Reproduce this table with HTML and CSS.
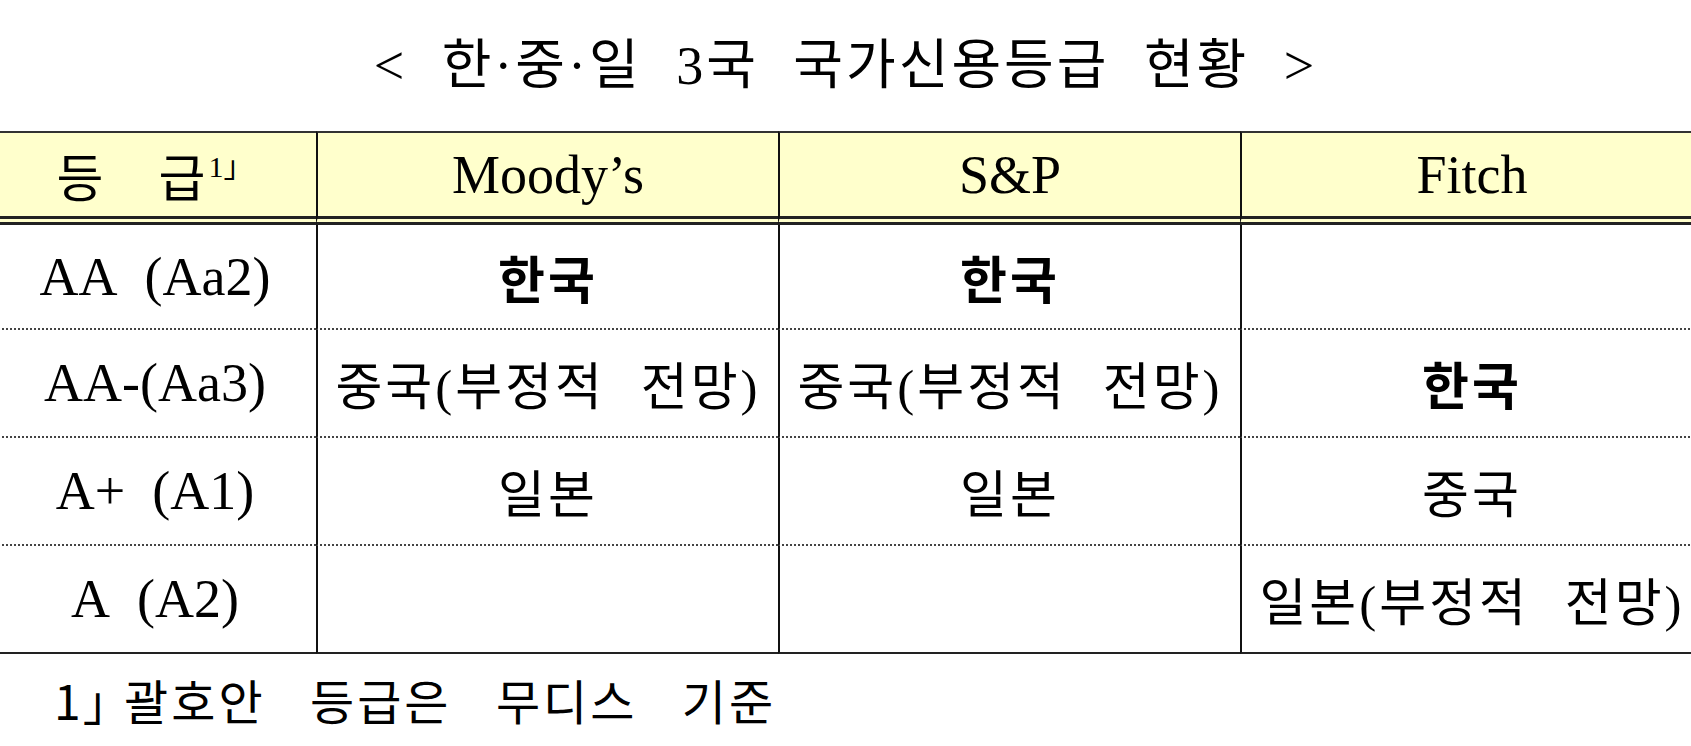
FILE: index.html
```html
<!DOCTYPE html>
<html lang="ko">
<head>
<meta charset="utf-8">
<title>한·중·일 3국 국가신용등급 현황</title>
<link rel="stylesheet" href="styles.css">
</head>
<body>
<h1 class="title">&lt; 한·중·일 3국 국가신용등급 현황 &gt;</h1>
<table class="ratings">
  <colgroup>
    <col class="c-grade">
    <col class="c-agency">
    <col class="c-agency">
    <col class="c-agency">
  </colgroup>
  <thead>
    <tr>
      <th class="ko">등<span class="gap"></span>급<sup class="note">1」</sup></th>
      <th>Moody’s</th>
      <th>S&amp;P</th>
      <th>Fitch</th>
    </tr>
  </thead>
  <tbody>
    <tr>
      <td class="grade">AA&nbsp; (Aa2)</td>
      <td class="ko strong">한국</td>
      <td class="ko strong">한국</td>
      <td></td>
    </tr>
    <tr>
      <td class="grade">AA-(Aa3)</td>
      <td class="ko">중국(부정적 전망)</td>
      <td class="ko">중국(부정적 전망)</td>
      <td class="ko strong">한국</td>
    </tr>
    <tr>
      <td class="grade">A+&nbsp; (A1)</td>
      <td class="ko">일본</td>
      <td class="ko">일본</td>
      <td class="ko">중국</td>
    </tr>
    <tr>
      <td class="grade">A&nbsp; (A2)</td>
      <td></td>
      <td></td>
      <td class="ko">일본(부정적 전망)</td>
    </tr>
  </tbody>
</table>
<p class="footnote"><span class="fn-mark">1」 </span>괄호안 등급은 무디스 기준</p>
</body>
</html>
```

FILE: styles.css
```css
html, body {
  margin: 0;
  padding: 0;
  background: #ffffff;
}

body {
  color: #000000;
  overflow: hidden;
  font-family: "Liberation Serif", "Noto Sans CJK KR", serif;
}

.title {
  box-sizing: border-box;
  margin: 0;
  height: 131px;
  padding-top: 34px;
  font-size: 54px;
  line-height: 64px;
  font-weight: 400;
  text-align: center;
  letter-spacing: 3px;
  word-spacing: 18px;
  font-family: "Liberation Serif", "Noto Sans CJK KR", serif;
}

.ratings {
  border-collapse: separate;
  border-spacing: 0;
  table-layout: fixed;
  width: 1708px;
  margin-left: -6px;
}

.c-grade {
  width: 322px;
}

.c-agency {
  width: 462px;
}

.ratings th,
.ratings td {
  box-sizing: border-box;
  padding: 0;
  text-align: center;
  vertical-align: middle;
  white-space: nowrap;
}

.ratings th {
  height: 94px;
  background: #ffffcc;
  border-top: 2px solid #333333;
  border-bottom: 9px double #222222;
  font-weight: 400;
  font-size: 54px;
}

.ratings th + th,
.ratings td + td {
  border-left: 2px solid #111111;
}

.ratings td {
  height: 108px;
  border-bottom: 2px dotted #444444;
}

.ratings tbody tr:first-child td {
  height: 105px;
}

.ratings tbody tr:last-child td {
  border-bottom: 2px solid #222222;
}

.grade {
  font-size: 54px;
}

.ratings .ko {
  font-size: 51px;
  letter-spacing: 3px;
  word-spacing: 20px;
}

.strong {
  font-weight: 700;
}

.gap {
  display: inline-block;
  width: 52px;
}

.note {
  font-size: 30px;
  line-height: 1;
  vertical-align: 20px;
  letter-spacing: 0;
}

.footnote {
  margin: 15px 0 0;
  padding-left: 54px;
  font-size: 48px;
  line-height: 60px;
  letter-spacing: 3px;
  word-spacing: 28px;
  font-family: "Noto Sans CJK KR", sans-serif;
}

.fn-mark {
  letter-spacing: 2px;
  word-spacing: 0;
  font-feature-settings: "halt" 1;
}
```
